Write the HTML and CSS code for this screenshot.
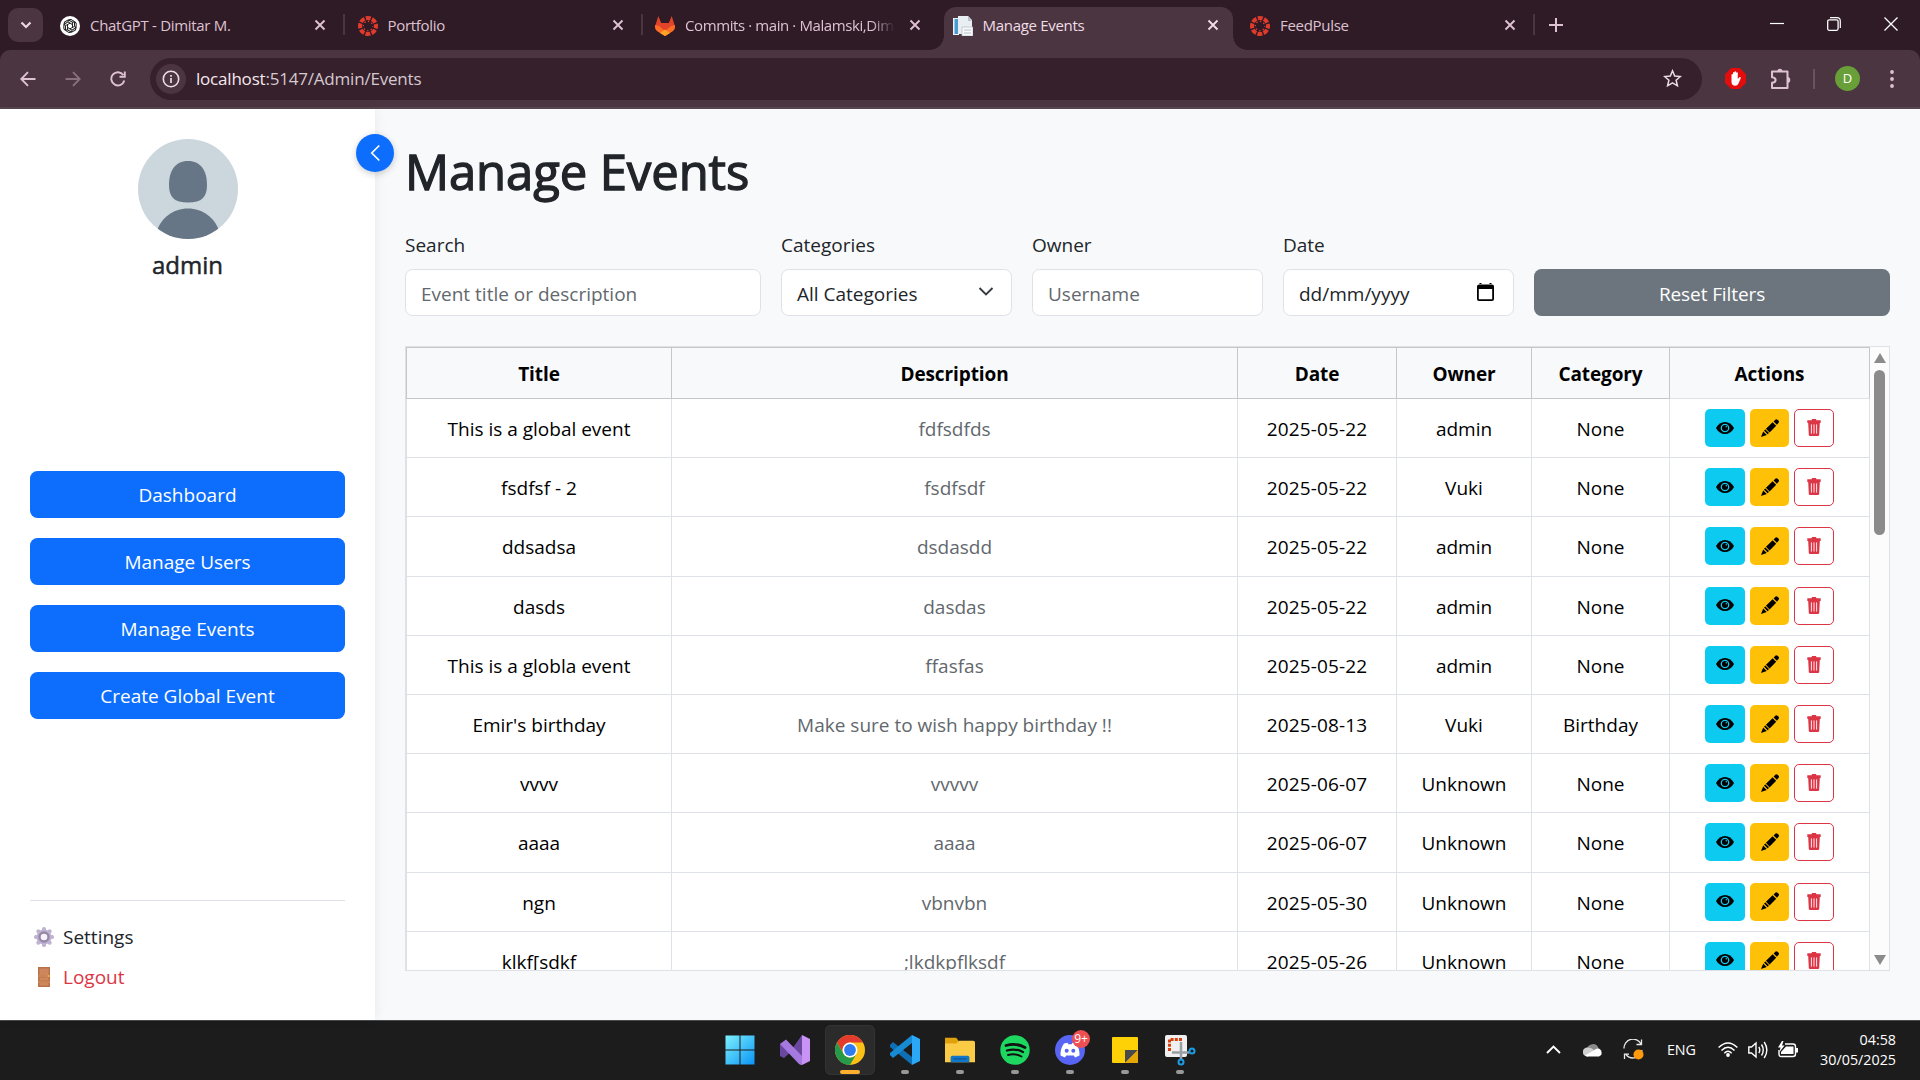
FILE: index.html
```html
<!DOCTYPE html>
<html lang="en">
<head>
<meta charset="utf-8">
<title>Manage Events</title>
<link rel="stylesheet" href="styles.css">
</head>
<body>
<svg class="defs" width="0" height="0">
  <symbol id="canvas" viewBox="0 0 20 20">
    <circle cx="10" cy="10" r="8" fill="none" stroke="#e13b2c" stroke-width="4" stroke-dasharray="4.9 1.38" stroke-dashoffset="2.4"/>
    <circle cx="10" cy="10" r="4.7" fill="none" stroke="#e13b2c" stroke-width="1.4" stroke-dasharray="1.4 2.29" stroke-dashoffset=".7"/>
  </symbol>
  <symbol id="x" viewBox="0 0 12 12"><path d="M1.5 1.5l9 9M10.5 1.5l-9 9" fill="none" stroke="currentColor" stroke-width="1.9"/></symbol>
  <symbol id="eye" viewBox="0 0 18 12"><path d="M0 6C4-2 14-2 18 6 14 14 4 14 0 6Z" fill="#000"/><circle cx="9" cy="6" r="3.7" fill="none" stroke="#0dcaf0" stroke-width="1.3"/><circle cx="10.3" cy="4.8" r=".8" fill="#0dcaf0"/></symbol>
  <symbol id="pencil" viewBox="0 0 18 18"><path d="M0 18L2.2 12.4 5.8 16ZM5 9.8L11.600 3.200 15.200 6.800 8.600 13.400ZM3 11.600L4.400 10.400 8 14 6.600 15.200ZM12.600 2.400L14.600.4Q15.600-.2 16.600.8L17.600 1.800Q18.400 2.800 17.600 3.800L15.900 5.700Z" fill="#000"/></symbol>
  <symbol id="trash" viewBox="0 0 14 17"><path d="M.3 1.200H4.600L5 0H9L9.400 1.200H13.700V4H12.800L12.200 16Q12.100 17 11 17H3Q1.900 17 1.800 16L1.200 4H.3Z" fill="#dc3545"/><path d="M4.400 5.400V14.600M7 5.400V14.600M9.600 5.400V14.600" stroke="#fff" stroke-width=".9"/></symbol>
</svg>

<header class="browser">
  <div class="tabstrip">
    <button class="tabmenu"><svg width="12" height="8" viewBox="0 0 12 8"><path d="M1.5 1.5L6 6 10.5 1.5" fill="none" stroke="#ecd6e2" stroke-width="2.2"/></svg></button>
    <div class="tab first">
      <svg class="fav" viewBox="0 0 20 20"><circle cx="10" cy="10" r="10" fill="#fff"/><g fill="none" stroke="#222" stroke-width="1"><path id="petal" d="M8 5.6Q8.5 3.2 11 3.400L14.500 5.600V10.400L10 12.800"/><use href="#petal" transform="rotate(60 10 10)"/><use href="#petal" transform="rotate(120 10 10)"/><use href="#petal" transform="rotate(180 10 10)"/><use href="#petal" transform="rotate(240 10 10)"/><use href="#petal" transform="rotate(300 10 10)"/></g></svg>
      <span class="name">ChatGPT - Dimitar M.</span><svg class="close"><use href="#x"/></svg>
    </div>
    <div class="tab">
      <svg class="fav"><use href="#canvas"/></svg>
      <span class="name">Portfolio</span><svg class="close"><use href="#x"/></svg>
    </div>
    <div class="tab nosep">
      <svg class="fav" viewBox="0 0 20 20"><path d="M3.3 0L6.2 7H13.8L16.7 0 20 10.5Q20 13 18 14.8L10 20 2 14.8Q0 13 0 10.5Z" fill="#e24329"/><path d="M0 9L4 10 10 15 16 10 20 9V11Q20 13.5 18 15L10 20 2 15Q0 13.5 0 11Z" fill="#fc6d26"/><path d="M10 13.5L15 17 10 20 5 17Z" fill="#fca326"/></svg>
      <span class="name fade">Commits · main · Malamski,Dim</span><svg class="close"><use href="#x"/></svg>
    </div>
    <div class="tab active nosep">
      <svg class="fav" viewBox="0 0 20 20"><path d="M0 2H6V19H0Z" fill="#eef3f6"/><path d="M1.5 3H5V18H1.5Z" fill="#4a9bd0"/><path d="M5 0H15L19 4V18H5Z" fill="#e9eef2"/><path d="M15 0L19 5H15Z" fill="#b9c5cd"/><path d="M9 11H20V20H9Z" fill="#f7f9fa" stroke="#b8c2c9" stroke-width=".8"/><path d="M11 14h7M11 17h7" stroke="#b8c2c9"/></svg>
      <span class="name">Manage Events</span><svg class="close"><use href="#x"/></svg>
    </div>
    <div class="tab">
      <svg class="fav"><use href="#canvas"/></svg>
      <span class="name">FeedPulse</span><svg class="close"><use href="#x"/></svg>
    </div>
    <svg class="plus" width="14" height="14" viewBox="0 0 14 14"><path d="M7 0V14M0 7H14" stroke="#dfc2d2" stroke-width="2"/></svg>
    <div class="winctl">
      <svg width="14" height="14" viewBox="0 0 14 14"><path d="M0 6.500H14" stroke="#fff" stroke-width="1.200"/></svg>
      <svg width="14" height="14" viewBox="0 0 14 14"><path d="M3 .7H10Q13.3.7 13.3 4V11" fill="none" stroke="#fff" stroke-width="1.2"/><rect x=".7" y="2.8" width="10.4" height="10.5" rx="1.5" fill="none" stroke="#fff" stroke-width="1.3"/></svg>
      <svg width="14" height="14" viewBox="0 0 14 14"><path d="M.5.5l13 13M13.5.5l-13 13" stroke="#fff" stroke-width="1.3"/></svg>
    </div>
  </div>
  <div class="toolbar">
    <div class="nav">
      <svg width="16" height="16" viewBox="0 0 16 16"><path d="M15.500 8H1.500M8 1.200L1.300 8 8 14.800" fill="none" stroke="#dfc2d2" stroke-width="1.900"/></svg>
      <svg width="16" height="16" viewBox="0 0 16 16"><path d="M.5 8H14.500M8 1.200L14.700 8 8 14.800" fill="none" stroke="#88707d" stroke-width="1.900"/></svg>
      <svg width="16" height="16" viewBox="0 0 16 16"><path d="M14.300 9.500A6.600 6.600 0 1 1 13.300 4M14.800 .5V5.800H9.500" fill="none" stroke="#dfc2d2" stroke-width="1.900"/></svg>
    </div>
    <div class="omnibox">
      <span class="info"><svg width="18" height="18" viewBox="0 0 18 18"><circle cx="9" cy="9" r="7.700" fill="none" stroke="#ecdde5" stroke-width="1.600"/><path d="M9 8V13M9 5V6.700" stroke="#ecdde5" stroke-width="1.700"/></svg></span>
      <span class="url"><b>localhost</b>:5147/Admin/Events</span>
      <svg class="star" width="19" height="19" viewBox="0 0 19 19"><path d="M9.500 1.800L11.700 7 17.400 7.500 13.100 11.200 14.400 16.800 9.500 13.800 4.600 16.800 5.900 11.200 1.600 7.500 7.300 7Z" fill="none" stroke="#ecdde5" stroke-width="1.500"/></svg>
    </div>
    <div class="ext">
      <svg width="21" height="21" viewBox="0 0 21 21"><path d="M6.200 0H14.800L21 6.200V14.800L14.800 21H6.200L0 14.800V6.200Z" fill="#e40d0d"/><path d="M6.500 11V6.500Q7.200 5.500 8 6.500V4.500Q8.700 3.500 9.500 4.500V3.700Q10.300 2.700 11.200 3.700V4.700Q12.100 3.700 12.800 4.700V11L14.600 9Q16 8.600 15.800 10L13.500 15.500Q12.500 17.800 10.200 17.800 6.700 17.800 6.500 14Z" fill="#fff"/></svg>
      <svg width="22" height="22" viewBox="0 0 22 22"><path d="M2 3.500H17.500V9.500V20H2V14.800Q5.600 14.500 5.600 12T2 9.200Z" fill="none" stroke="#dfc2d2" stroke-width="2" stroke-linejoin="round"/><path d="M7.300 3.500A2.600 2.800 0 0 1 12.500 3.500ZM17.500 9A2.700 2.900 0 0 1 17.500 15Z" fill="#dfc2d2"/></svg>
      <i class="bar"></i>
      <span class="user">D</span>
      <svg width="4" height="18" viewBox="0 0 4 18"><g fill="#dfc2d2"><circle cx="2" cy="2" r="1.900"/><circle cx="2" cy="9" r="1.900"/><circle cx="2" cy="16" r="1.900"/></g></svg>
    </div>
  </div>
</header>

<div class="page">
  <aside class="sidebar">
    <svg class="avatar" viewBox="0 0 100 100"><defs><clipPath id="round"><circle cx="50" cy="50" r="50"/></clipPath></defs><g clip-path="url(#round)"><rect width="100" height="100" fill="#ccd6dd"/><path d="M50 22C63 22 69 32 69 46 69 58 64 63.500 50 63.500S31 58 31 46C31 32 37 22 50 22Z" fill="#667686"/><path d="M50 69.500C65 69.500 77 79 81 92V100H19V92C23 79 35 69.500 50 69.500Z" fill="#667686"/></g></svg>
    <div class="who">admin</div>
    <nav class="menu">
      <a>Dashboard</a><a>Manage Users</a><a>Manage Events</a><a>Create Global Event</a>
    </nav>
    <div class="foot">
      <a><svg width="20" height="20" viewBox="0 0 20 20"><g fill="#bfb2d2"><circle cx="10" cy="10" r="7.500"/><g id="teeth"><rect x="8" y="0" width="4" height="20" rx="1.800"/><rect x="0" y="8" width="20" height="4" rx="1.800"/></g><use href="#teeth" transform="rotate(45 10 10)"/></g><circle cx="10" cy="10" r="4.500" fill="#f6f3fa" stroke="#9689a5" stroke-width="2.400"/></svg><span>Settings</span></a>
      <a class="out"><svg width="20" height="20" viewBox="0 0 20 20"><path d="M4 0H16V20H4Z" fill="#b9714a"/><path d="M5.500 1.500H14.500V8H5.500ZM5.500 10.500H14.500V13.500H5.500ZM5.500 16H14.500V18.500H5.500Z" fill="#cd875c"/><path d="M4 9H16M4 15H16" stroke="#df9460"/><circle cx="14.500" cy="9" r="1" fill="#fbb03b"/></svg><span>Logout</span></a>
    </div>
    <button class="toggle"><svg width="12" height="18" viewBox="0 0 12 18"><path d="M10.300 1.500L2.800 9 10.300 16.500" fill="none" stroke="#fff" stroke-width="1.700"/></svg></button>
  </aside>

  <main class="main">
    <h1>Manage Events</h1>
    <div class="filters">
      <label>Search<span class="field ph">Event title or description</span></label>
      <label>Categories<span class="field">All Categories<svg width="16" height="10" viewBox="0 0 16 10"><path d="M1.500 1L8 7.500 14.500 1" fill="none" stroke="#343a40" stroke-width="1.900"/></svg></span></label>
      <label>Owner<span class="field ph">Username</span></label>
      <label>Date<span class="field date">dd/mm/yyyy<svg width="17" height="18" viewBox="0 0 17 18"><path d="M2 1.500H15Q17 1.500 17 3.500V16Q17 18 15 18H2Q0 18 0 16V3.500Q0 1.500 2 1.500ZM1.800 6V16.200H15.200V6ZM2.500 0H4.500V2H2.500ZM12.500 0H14.500V2H12.500Z" fill="#000" fill-rule="evenodd"/></svg></span></label>
      <button class="reset">Reset Filters</button>
    </div>
    <div class="tablebox">
      <table>
        <colgroup><col class="c1"><col class="c2"><col class="c3"><col class="c4"><col class="c5"><col class="c6"></colgroup>
        <thead><tr><th>Title</th><th>Description</th><th>Date</th><th>Owner</th><th>Category</th><th>Actions</th></tr></thead>
        <tbody id="rows"></tbody>
      </table>
      <div class="scroll"><i class="up"></i><i class="thumb"></i><i class="down"></i></div>
    </div>
  </main>
</div>

<footer class="taskbar">
  <div class="apps">
    <span class="app"><svg viewBox="0 0 30 30"><defs><linearGradient id="win" x1="0" y1="0" x2="1" y2="1"><stop offset="0" stop-color="#7df1fd"/><stop offset="1" stop-color="#0a94f5"/></linearGradient></defs><path d="M.5.5H14.500V14.500H.5ZM15.500.5H29.500V14.500H15.500ZM.5 15.500H14.500V29.500H.5ZM15.500 15.500H29.500V29.500H15.500Z" fill="url(#win)"/></svg></span>
    <span class="app"><svg viewBox="0 0 30 30"><path d="M0 9L4 7 14 16 22 0V30L14 14 4 23 0 21Z" fill="#6a489f"/><path d="M12 14L22 0V10L15 18ZM12 18L22 8V30Z" fill="#6a489f"/><path d="M22 0L30 4V26L22 30Z" fill="#c992f5"/><path d="M0 9L6 4.500 22 21V30Q20 30 18.500 28.500Z" fill="#a679e0"/></svg></span>
    <span class="app on"><svg viewBox="0 0 30 30"><circle cx="15" cy="15" r="15" fill="#fbc116"/><path d="M2 7.500A15 15 0 0 1 28 7.500H15A7.500 7.500 0 0 0 8.500 18.700Z" fill="#e33b2e"/><path d="M2 7.500L8.500 18.700A7.500 7.500 0 0 0 21.500 18.800L15 30A15 15 0 0 1 2 7.500Z" fill="#269a48"/><circle cx="15" cy="15" r="7.500" fill="#fff"/><circle cx="15" cy="15" r="5.900" fill="#2e7cf0"/></svg><i></i></span>
    <span class="app run"><svg viewBox="0 0 30 30"><path d="M0 10L3 7 22 22V30L0 12Z" fill="#0f6fb5"/><path d="M0 20L3 23 22 8V0L0 18Z" fill="#168bd3"/><path d="M22 0L30 4V26L22 30Z" fill="#2aa8f5"/></svg><i></i></span>
    <span class="app run"><svg viewBox="0 0 32 30"><path d="M0 2H12L15 6H31V15H0Z" fill="#e0a10d"/><path d="M0 8H12L15 5H30Q32 5 32 7V28H0Z" fill="#fbcb46"/><path d="M6 28V23Q6 21 8 21H24Q26 21 26 23V28Z" fill="#1276c9"/><path d="M9 24.500H23" stroke="#0a4d8c"/></svg><i></i></span>
    <span class="app run"><svg viewBox="0 0 30 30"><circle cx="15" cy="15" r="14.700" fill="#1ed760"/><g fill="none" stroke="#111" stroke-linecap="round"><path d="M6 10.500Q16 7.500 25 12.500" stroke-width="2.800"/><path d="M7 15.500Q15.500 13 23 17" stroke-width="2.300"/><path d="M8 20Q15 18 21.500 21.500" stroke-width="1.900"/></g></svg><i></i></span>
    <span class="app run"><svg viewBox="0 0 30 30"><circle cx="15" cy="15" r="15" fill="#5865f2"/><path d="M9 8.500L12.500 7.800 13.300 9.200H16.700L17.500 7.800 21 8.500Q25 14 24.500 20.500L20 22.500 18.800 20.500H11.200L10 22.500 5.500 20.500Q5 14 9 8.500Z" fill="#fff"/><circle cx="11.700" cy="15.800" r="2" fill="#5865f2"/><circle cx="18.300" cy="15.800" r="2" fill="#5865f2"/></svg><i></i><b class="badge">9+</b></span>
    <span class="app run"><svg viewBox="0 0 30 30"><rect x="2" y="2" width="26" height="26" rx="1" fill="#fdd106"/><path d="M15 28V15H28Z" fill="#4a4a4a"/><path d="M15 28L28 15V28Z" fill="#e5a708"/></svg><i></i></span>
    <span class="app run"><svg class="snip" viewBox="0 0 30 30"><rect width="22" height="22" rx="2" fill="#f0f0f0"/><path d="M4.500 16V4.500H17" fill="none" stroke="#d6400c" stroke-width="3" stroke-dasharray="3 1.200"/><path d="M16 7V24M7 17.500H24" stroke="#9a9fa3" stroke-width="2.500"/><g fill="none" stroke="#1c9ce4" stroke-width="2"><circle cx="27" cy="16" r="2.500"/><circle cx="16" cy="27" r="2.500"/></g></svg><i></i></span>
  </div>
  <div class="tray">
    <svg class="chev" width="15" height="9" viewBox="0 0 15 9"><path d="M1 8L7.500 1.500 14 8" fill="none" stroke="#fff" stroke-width="1.900"/></svg>
    <svg class="cloud" width="20" height="14" viewBox="0 0 20 14"><path d="M4 6A6 6 0 0 1 15.500 5L19 8 12 9Z" fill="#8b8b8b"/><path d="M4.500 4.500Q8 4 11 7L5 13.500H4A4.500 4.500 0 0 1 4.500 4.500Z" fill="#cfcfcf"/><path d="M2 12.500L13 6A4 4 0 0 1 16 13.500H4Z" fill="#fff"/></svg>
    <svg class="sync" width="21" height="21" viewBox="0 0 21 21"><path d="M1 9.500A9 9 0 0 1 18 5M18.500.5V5.500H13.500M19 11A9 9 0 0 1 3 15.500M1.500 20V15.200H6" fill="none" stroke="#e8e8e8" stroke-width="1.300"/><circle cx="15.500" cy="15.500" r="5" fill="#ff9a0a"/></svg>
    <span class="lang">ENG</span>
    <svg class="wifi" width="20" height="15" viewBox="0 0 20 15"><g fill="none" stroke="#fff" stroke-width="1.500"><path d="M.6 5.500Q10-3.500 19.400 5.500"/><path d="M3.500 8.500Q10 2 16.500 8.500"/><path d="M6.300 11.200Q10 7.500 13.700 11.200"/></g><circle cx="10" cy="13" r="1.900" fill="#fff"/></svg>
    <svg class="vol" width="20" height="18" viewBox="0 0 20 18"><g fill="none" stroke="#fff" stroke-width="1.400"><path d="M.8 6H3.500L8 2V16L3.500 12H.8Z"/><path d="M10.800 6Q12.800 9 10.800 12M13.500 3.500Q17 9 13.500 14.500M16.200 1Q21.500 9 16.200 17"/></g></svg>
    <svg class="batt" width="20" height="17" viewBox="0 0 20 17"><path d="M7 3H15Q17.500 3 17.500 5.500V13Q17.500 15.500 15 15.500H3Q1 15.500 1 13V9" fill="none" stroke="#fff" stroke-width="1.400"/><path d="M8 5.500H15.500V13H3V11Z" fill="#fff"/><path d="M18 7H20V11.500H18Z" fill="#fff"/><path d="M4 0L0 6.500H2.500L1.500 11 6.500 4.500H4L5.500 0Z" fill="#fff"/></svg>
    <div class="clock"><span>04:58</span><span>30/05/2025</span></div>
  </div>
</footer>
<script src="rows.js"></script>
</body>
</html>
```
FILE: styles.css
```css
* { box-sizing: border-box; }
body { margin: 0; width: 1920px; height: 1080px; overflow: hidden; display: flex; flex-direction: column; font: 19px/30px "Open Sans", "Noto Sans", sans-serif; color: #212529; background: #f8f9fb; }
button { font: inherit; border: 0; padding: 0; }
svg { display: block; flex: none; }
.defs { position: absolute; }

/* browser window */
.browser { height: 109px; flex: none; background: #2e1b26; }
.tabstrip { height: 50px; display: flex; padding: 7px 22px 0 8px; }
.tabmenu { width: 35px; height: 34px; margin-top: 1px; border-radius: 10px; background: #4b3541; display: flex; align-items: center; justify-content: center; }
.tab { position: relative; width: 289px; height: 43px; margin-right: 8.500px; padding: 0 14px 7px 9px; display: flex; align-items: center; font-size: 15px; letter-spacing: -.3px; color: #dfc2d2; }
.tab.first { margin-left: 8px; }
.tab::after { content: ""; position: absolute; right: -5px; top: 7px; width: 2px; height: 21px; background: #4b3541; }
.tab.nosep::after { display: none; }
.fav { width: 20px; height: 20px; margin-top: 1px; }
.name { flex: 1; margin: 0 12px 0 10px; white-space: nowrap; }
.fade { letter-spacing: -.4px; -webkit-mask-image: linear-gradient(to right, #000 88%, transparent 99%); mask-image: linear-gradient(to right, #000 88%, transparent 99%); }
.close { width: 12px; height: 12px; }
.tab.active { background: #4b3541; border-radius: 12px 12px 0 0; color: #f0dde6; }
.tab.active::before, .tab.active::after { display: block; content: ""; position: absolute; top: auto; bottom: 0; width: 14px; height: 14px; background: none; }
.tab.active::before { left: -14px; background: radial-gradient(circle at 0 0, transparent 13.500px, #4b3541 14px); }
.tab.active::after { right: -14px; background: radial-gradient(circle at 100% 0, transparent 13.500px, #4b3541 14px); }
.plus { margin: 11px 0 0 10px; }
.winctl { margin-left: auto; display: flex; gap: 43px; padding-top: 10px; }
.toolbar { height: 59px; display: flex; align-items: center; background: #4b3541; border-radius: 10px 10px 0 0; border-bottom: 2px solid #574650; }
.nav { width: 150px; padding-left: 20px; display: flex; gap: 29px; }
.omnibox { width: 1552px; height: 42px; border-radius: 21px; background: #35202c; display: flex; align-items: center; padding: 0 20px 0 6px; }
.info { width: 30px; height: 30px; border-radius: 50%; background: #4b3541; display: flex; align-items: center; justify-content: center; }
.url { margin: 1px 0 0 10px; font-size: 17px; letter-spacing: -.2px; color: #d6c8cf; }
.url b { font-weight: 400; color: #f5e8ee; }
.star { margin-left: auto; }
.ext { display: flex; align-items: center; margin-left: 23px; }
.ext > :nth-child(2) { margin-left: 24px; }
.bar { width: 2px; height: 20px; margin-left: 21px; background: #6b5260; }
.user { width: 25px; height: 25px; margin: 0 30px 0 20px; border-radius: 50%; background: #689f38; color: #fff; font-size: 13px; line-height: 25px; text-align: center; }

/* page */
.page { height: 911px; flex: none; display: flex; }
.sidebar { position: relative; z-index: 1; width: 375px; padding: 30px; background: #fff; box-shadow: 0 0 12px rgba(0,0,0,.07); display: flex; flex-direction: column; }
.avatar { width: 100px; height: 100px; align-self: center; }
.who { margin-top: 11px; text-align: center; font-size: 24px; line-height: 30px; -webkit-text-stroke: .5px #212529; }
.menu { margin-top: 191px; display: flex; flex-direction: column; gap: 20px; }
.menu a { height: 47px; line-height: 48px; border-radius: 7.500px; background: #0d6efd; color: #fff; text-align: center; }
.foot { margin-top: auto; height: 110px; margin-bottom: -20px; border-top: 1px solid #dee2e6; padding-top: 20px; }
.foot a { display: flex; align-items: center; gap: 10px; height: 40px; padding: 0 0 8px 4px; }
.foot span { margin-left: -1px; }
.out { color: #dc3545; }
.toggle { position: absolute; top: 25px; right: -19px; width: 38px; height: 38px; border-radius: 50%; background: #0d6efd; box-shadow: 0 2px 7px rgba(0,0,0,.2); display: flex; align-items: center; justify-content: center; }
.main { flex: 1; padding: 30px; }
h1 { margin: 1px 0 0; height: 61px; font-size: 49px; line-height: 62px; font-weight: 400; letter-spacing: -.1px; white-space: nowrap; -webkit-text-stroke: 1.300px #212529; }
.filters { display: grid; grid-template-columns: 356px 231px 231px 231px 356px; gap: 20px; align-items: end; margin-top: 29px; }
.filters label { display: block; }
.field { display: flex; align-items: center; justify-content: space-between; height: 47px; margin-top: 9px; padding: 2px 17px 0 15px; border: 1px solid #dee2e6; border-radius: 7.500px; background: #fff; }
.field svg { margin-top: -3px; }
.field.ph { color: #62686d; }
.field.date { padding-right: 19px; }
.reset { height: 47px; border-radius: 7.500px; background: #6c757d; color: #fff; padding-top: 2px; letter-spacing: -.1px; }
.tablebox { display: flex; height: 625px; margin-top: 30px; border: 1px solid #dee2e6; overflow: hidden; }
table { width: 1464px; flex: none; align-self: flex-start; table-layout: fixed; border-collapse: separate; border-spacing: 0; text-align: center; color: #000; background: #fff; }
.c1 { width: 266px; } .c2 { width: 566px; } .c3 { width: 159px; } .c4 { width: 135px; } .c5 { width: 138px; } .c6 { width: 200px; }
th { height: 52px; padding: 1px 0 0; font-weight: 700; font-size: 19px; letter-spacing: -.1px; background: #f8f9fb; border: solid #c6c7c8; border-width: 1px 1px 1px 0; }
th:first-child { border-left-width: 1px; }
th:last-child { border-bottom-color: #dee2e6; }
td { height: 59.200px; padding: 2px 0 0; border: solid #dee2e6; border-width: 0 1px 1px 0; }
td:first-child { border-left-width: 1px; }
td:nth-child(2) { color: #62686d; }
td:nth-child(3) { letter-spacing: .15px; }
td:last-child { padding: 0; }
.acts { display: flex; justify-content: center; gap: 5px; }
.acts button { width: 40px; height: 38px; padding-bottom: 1px; border-radius: 5px; display: flex; align-items: center; justify-content: center; }
.view { background: #0dcaf0; }
.acts .edit { width: 39px; background: #ffc107; }
.del { background: #fff; }
.acts .del { border: 1px solid #dc3545; }
.scroll { flex: 1; background: #fcfcfc; display: flex; flex-direction: column; align-items: center; padding: 6px 0 5px; }
.up, .down { border: solid transparent; border-width: 0 6.500px 10px; border-bottom-color: #8b8b8b; }
.down { border-width: 10px 6.500px 0; border-top-color: #8b8b8b; margin-top: auto; }
.thumb { width: 11px; height: 165px; margin-top: 7px; border-radius: 6px; background: #8b8b8b; }

/* taskbar */
.taskbar { position: relative; height: 60px; flex: none; display: flex; justify-content: flex-end; background: #1c1c1c; border-top: 1px solid #484a4a; color: #fff; }
.apps { position: absolute; left: 715px; top: 4px; display: flex; gap: 5px; }
.app { position: relative; width: 50px; height: 50px; padding: 10px; border-radius: 6px; }
.app svg { width: 30px; height: 30px; }
.app.on { background: #2b2b2b; box-shadow: inset 0 0 0 1px #333; }
.app i { position: absolute; left: 21px; bottom: 1px; width: 8px; height: 4px; border-radius: 2px; background: #989898; }
.app.on i { left: 15px; width: 20px; background: #ffb02e; }
.badge { position: absolute; left: 27px; top: 5px; width: 18px; height: 18px; border-radius: 50%; background: #ed4f52; font-size: 12px; line-height: 18px; font-weight: 400; text-align: center; }
.snip { overflow: visible; }
.tray { display: flex; align-items: center; padding: 0 24px 2px 0; font-size: 14.300px; }
.cloud { margin-left: 22px; }
.sync { margin-left: 20px; }
.lang { margin: 0 22px 0 23px; }
.vol { margin: 0 10px; }
.clock { display: flex; flex-direction: column; line-height: 20px; text-align: right; width: 98px; }
```
FILE: rows.js
```js
const events = [
  ["This is a global event", "fdfsdfds", "2025-05-22", "admin", "None"],
  ["fsdfsf - 2", "fsdfsdf", "2025-05-22", "Vuki", "None"],
  ["ddsadsa", "dsdasdd", "2025-05-22", "admin", "None"],
  ["dasds", "dasdas", "2025-05-22", "admin", "None"],
  ["This is a globla event", "ffasfas", "2025-05-22", "admin", "None"],
  ["Emir's birthday", "Make sure to wish happy birthday !!", "2025-08-13", "Vuki", "Birthday"],
  ["vvvv", "vvvvv", "2025-06-07", "Unknown", "None"],
  ["aaaa", "aaaa", "2025-06-07", "Unknown", "None"],
  ["ngn", "vbnvbn", "2025-05-30", "Unknown", "None"],
  ["klkf[sdkf", ";lkdkpflksdf", "2025-05-26", "Unknown", "None"]
];
const actions = `<td><div class="acts">
  <button class="view"><svg width="18" height="12"><use href="#eye"/></svg></button>
  <button class="edit"><svg width="18" height="18"><use href="#pencil"/></svg></button>
  <button class="del"><svg width="14" height="17"><use href="#trash"/></svg></button>
</div></td>`;
document.getElementById("rows").innerHTML = events
  .map(e => `<tr>${e.map(c => `<td>${c}</td>`).join("")}${actions}</tr>`)
  .join("");
```
